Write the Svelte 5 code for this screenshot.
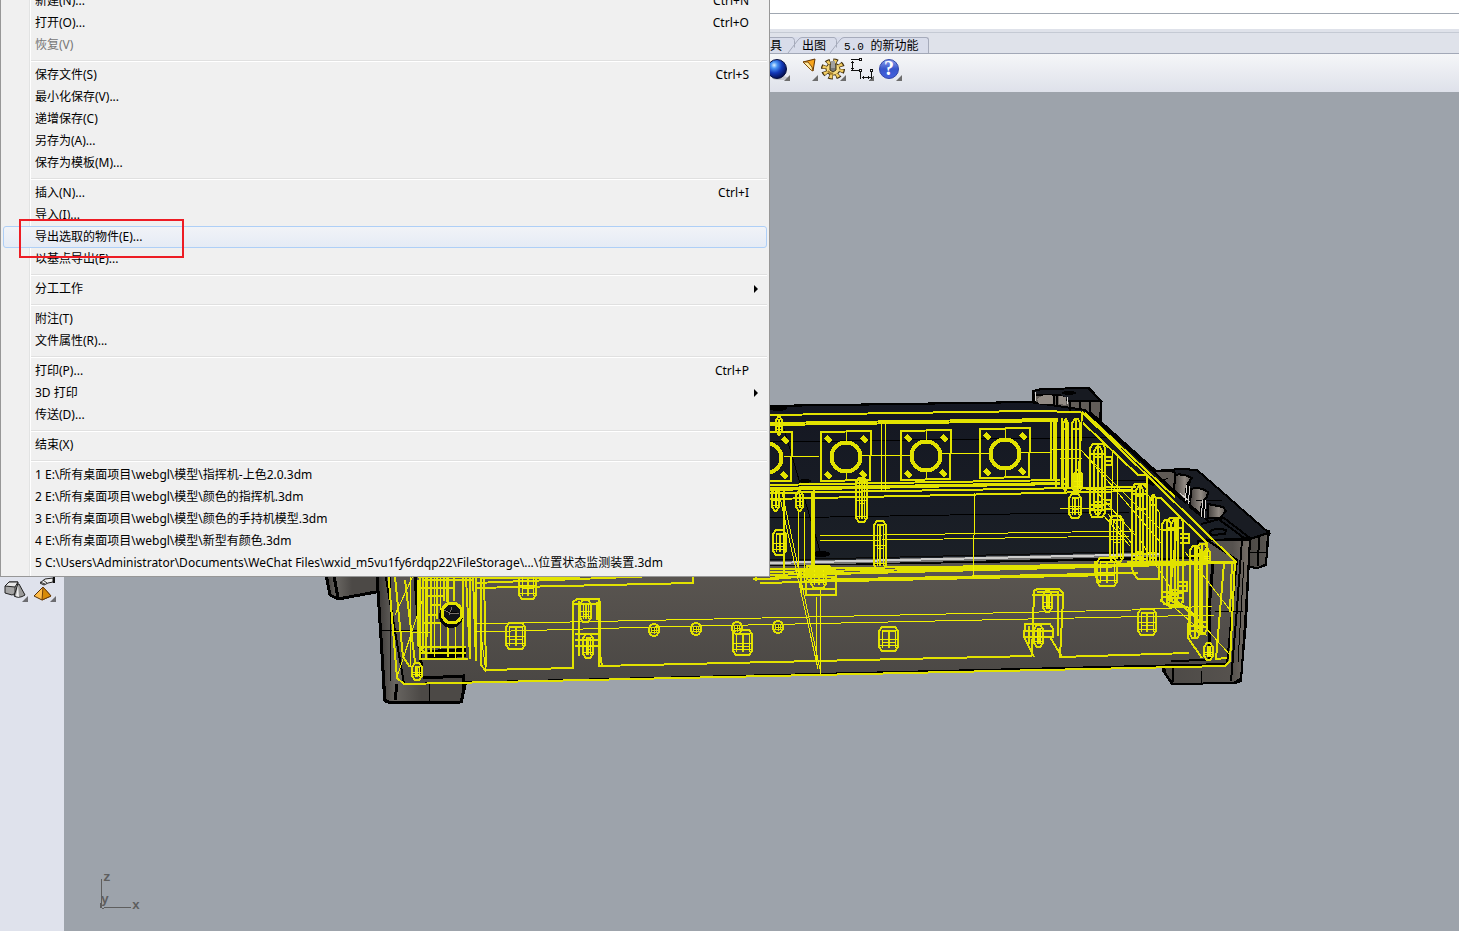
<script>
  const groups = [
    [
      { label: '新建(N)...', key: 'Ctrl+N' },
      { label: '打开(O)...', key: 'Ctrl+O' },
      { label: '恢复(V)', disabled: true }
    ],
    [
      { label: '保存文件(S)', key: 'Ctrl+S' },
      { label: '最小化保存(V)...' },
      { label: '递增保存(C)' },
      { label: '另存为(A)...' },
      { label: '保存为模板(M)...' }
    ],
    [
      { label: '插入(N)...', key: 'Ctrl+I' },
      { label: '导入(I)...' },
      { label: '导出选取的物件(E)...', active: true },
      { label: '以基点导出(E)...' }
    ],
    [{ label: '分工工作', sub: true }],
    [{ label: '附注(T)' }, { label: '文件属性(R)...' }],
    [
      { label: '打印(P)...', key: 'Ctrl+P' },
      { label: '3D 打印', sub: true },
      { label: '传送(D)...' }
    ],
    [{ label: '结束(X)' }],
    [
      { label: '1 E:\\所有桌面项目\\webgl\\模型\\指挥机-上色2.0.3dm' },
      { label: '2 E:\\所有桌面项目\\webgl\\模型\\颜色的指挥机.3dm' },
      { label: '3 E:\\所有桌面项目\\webgl\\模型\\颜色的手持机模型.3dm' },
      { label: '4 E:\\所有桌面项目\\webgl\\模型\\新型有颜色.3dm' },
      { label: '5 C:\\Users\\Administrator\\Documents\\WeChat Files\\wxid_m5vu1fy6rdqp22\\FileStorage\\...\\位置状态监测装置.3dm' }
    ]
  ];

  // Connector flanges on the rear wall: centre of each bore.
  const flanges = [[767, 458], [846, 457], [926, 456], [1005, 454]];
  // Threaded bosses: x, y, width, height.
  const bosses = [
    [506, 623, 19, 26], [519, 570, 17, 29], [733, 630, 19, 25], [879, 627, 19, 24],
    [1138, 609, 18, 26], [412, 663, 10, 17], [580, 600, 11, 22], [583, 634, 10, 24],
    [1043, 591, 9, 21], [1034, 625, 9, 22], [1204, 643, 9, 17], [773, 530, 13, 25],
    [856, 478, 11, 44], [874, 521, 12, 48], [796, 491, 7, 20], [1069, 494, 12, 24],
    [772, 488, 7, 23], [776, 416, 6, 19], [811, 566, 15, 22], [1097, 558, 20, 28],
    [1110, 516, 13, 46], [1204, 548, 6, 16], [1074, 470, 8, 22]
  ];
  const holes = [[654, 630], [696, 629], [737, 628], [778, 627]];
  // Tall ribs along the right wall: x, top, width, height.
  const ribs = [
    [1063, 419, 5, 72], [1072, 419, 8, 72], [1090, 444, 15, 73], [1094, 447, 8, 67],
    [1132, 484, 15, 82], [1136, 486, 7, 78], [1150, 495, 6, 70], [1162, 520, 9, 84],
    [1167, 518, 16, 87], [1171, 520, 7, 82], [1190, 546, 10, 92], [1197, 544, 10, 90]
  ];
</script>

<div class="app">
  <header>
    <div class="command"></div>
    <div class="prompt"></div>
    <div class="tabs">
      <button class="tab">工具</button>
      <svg class="slant" viewBox="0 0 16 16"><path d="M0 .5h6q2 0 2.500 3v7M2 16 12 3Q14 .5 16 .5" /></svg>
      <button class="tab">出图</button>
      <svg class="slant" viewBox="0 0 16 16"><path d="M0 .5h6q2 0 2.500 3v7M2 16 12 3Q14 .5 16 .5" /></svg>
      <button class="tab last"><span class="mono">5.0&nbsp;</span>的新功能</button>
    </div>
    <div class="toolbar">
      <button class="tool" aria-label="Render">
        <svg viewBox="0 0 28 28">
          <defs><radialGradient id="ball" cx=".35" cy=".3" r=".75"><stop offset="0" stop-color="#d9efff" /><stop offset=".22" stop-color="#4b96f5" /><stop offset=".55" stop-color="#1238b8" /><stop offset="1" stop-color="#020a48" /></radialGradient></defs>
          <ellipse cx="18" cy="24" rx="8" ry="2" fill="#c3c5cd" /><circle cx="15" cy="15" r="9.500" fill="url(#ball)" stroke="#061040" />
          <path d="M22 27h6v-6z" fill="#6d6d6d" />
        </svg>
      </button>
      <button class="tool" aria-label="Spotlight">
        <svg viewBox="0 0 28 28"><path d="m13 8 12-3-2 12z" fill="#f8a51c" stroke="#613300" /><path d="m13 8 8 8 2 1-1-4-4-5z" fill="#ffeaa3" stroke="#804c0a" /><path d="M22 27h6v-6z" fill="#6d6d6d" /></svg>
      </button>
      <button class="tool" aria-label="Options">
        <svg viewBox="0 0 28 28">
          <g transform="translate(15 15) scale(1 .88)">
            <circle r="9" stroke="#3c2a0a" stroke-width="6" stroke-dasharray="4.100 2.970" /><circle r="7.500" fill="#3c2a0a" />
            <circle r="8.500" stroke="#f2cd62" stroke-width="4.500" stroke-dasharray="2.700 3.975" stroke-dashoffset="-.5" /><circle r="6.500" fill="#f6da80" />
          </g>
          <path d="m10 17 2 2 3 1" stroke="#a8802c" stroke-width="2" /><path d="M12 10h6v6l-3 2-3-2z" fill="#777" stroke="#443715" /><path d="M13 7h4v7h-4z" fill="#a0a0a0" /><path d="M22 27h6v-6z" fill="#6d6d6d" />
        </svg>
      </button>
      <button class="tool" aria-label="Dimensions">
        <svg viewBox="0 0 28 28" shape-rendering="crispEdges"><path d="M22 27h6v-6z" fill="#6d6d6d" /><path d="M5 5.500h8M6.500 7v9M5 16.500h8M5 8.500h3M5 14.500h3M14.500 17v8M25.500 17v8M16 23.500h9M17.500 22v3M22.500 22v3" stroke="#111" fill="none" /><path d="M13.500 4.500h2v2h-2zM13.500 15.500h2v2h-2zM24.500 15.500h2v2h-2z" fill="#fff" stroke="#111" /></svg>
      </button>
      <button class="tool" aria-label="Help">
        <svg viewBox="0 0 28 28">
          <defs><linearGradient id="help" x2="0" y2="1"><stop stop-color="#8ca2ee" /><stop offset=".5" stop-color="#3755cb" /><stop offset="1" stop-color="#4662df" /></linearGradient></defs>
          <circle cx="15" cy="15" r="9.500" fill="url(#help)" stroke="#3346a8" /><text x="15" y="21" text-anchor="middle" class="question">?</text><path d="M22 27h6v-6z" fill="#6d6d6d" />
        </svg>
      </button>
    </div>
  </header>

  <main>
    <aside>
      <button class="tool" aria-label="Solids">
        <svg viewBox="0 0 28 28"><path d="m5 12 4-4h9l-2 11-4 2-7-2z" fill="#a4a4a4" stroke="#222" /><path d="m5 12 4-4h9l-3 5z" fill="#e6e6e6" stroke="#222" /><path d="M15 13v7" stroke="#333" /><path d="m18 10-4 12q5 3 11-1L19 10z" fill="#999" stroke="#222" /><path d="m18 11-2 11 3 1z" fill="#eee" /><path d="M22 28h6v-6z" fill="#6c6c70" /></svg>
      </button>
      <button class="tool" aria-label="Edit solids">
        <svg viewBox="0 0 28 28"><path d="m12 9 5-4 8-1v4l-5 1-4 2z" fill="#eee" stroke="#222" /><path d="M25 3h2v6h-2z" fill="#111" /><path d="m12 8 5 2m-2-4 4 3" stroke="#333" /><path d="m6 22 9-9 8 9-9 4z" fill="#ffbd4b" stroke="#553008" /><path d="m15 13-1 13 9-4z" fill="#d88b08" stroke="#70400c" /><path d="M22 28h6v-6z" fill="#6c6c70" /></svg>
      </button>
    </aside>

    <section class="viewport" aria-label="Perspective">
      <svg class="scene" viewBox="64 92 1395 839" preserveAspectRatio="xMinYMin slice">
        <defs>
          <linearGradient id="front" x2="0" y2="1"><stop stop-color="#5e5954" /><stop offset="1" stop-color="#4a4744" /></linearGradient>
          <linearGradient id="leg"><stop stop-color="#393634" /><stop offset=".2" stop-color="#686561" /><stop offset=".5" stop-color="#4c4946" /></linearGradient>
          <linearGradient id="legright"><stop stop-color="#4c4946" /><stop offset=".8" stop-color="#56524e" /><stop offset="1" stop-color="#777069" /></linearGradient>
          <linearGradient id="bore"><stop stop-color="#45413e" /><stop offset=".6" stop-color="#918a83" /><stop offset="1" stop-color="#575350" /></linearGradient>
          <linearGradient id="deck" x2="0" y2="1"><stop stop-color="#141722" /><stop offset="1" stop-color="#1c2127" /></linearGradient>
        </defs>

        <g class="solid">
          <path d="M326 570l4 25 8 4 40-7v-22z" fill="url(#leg)" />
          <path d="M377 570l7 128 6 5 72-1 4-25-60-5V570z" fill="url(#leg)" />
          <path d="M1250 534l19-3-3 33-8 4-9-1z" fill="url(#legright)" />
          <path d="M1033 402v-11l55-2 13 13-1 20-17-12z" fill="#625d58" />
          <path d="M1033 391l9-2 46-1 13 13-33 0-8-6-27 0z" fill="#171a21" />
          <path d="M1155 471l26-2 16 1 72 63-19 6-60-2z" fill="#191c23" />
          <path d="M760 406l270-4 55 8 65 58 98 73-16 25-474 12z" fill="url(#deck)" />
          <path d="M1198 541l52-3-4 85-5 55-7 5-62 1-9-13 0-7 35-18z" fill="url(#legright)" />
          <path d="M385 572l820-14 2-18 30 20-10 104-823 20z" fill="url(#front)" stroke="none" />
          <path d="M1153 471l19 0 3 2-1 20z" fill="#5f5a55" />
          <path d="M1175 475q8-2 17 3-6 6-6 14l-1 10-11-9z" fill="url(#bore)" />
          <path d="M1191 489q8-3 17 3l-1 5q-5 4-6 12v7l-11-9z" fill="url(#bore)" />
          <path d="M1208 504l15 3 3 4-6 7-12 0z" fill="url(#bore)" />
        </g>

        <g class="black">
          <path d="M770 406l265-4M1035 402l-2-11 8-2 48-1 12 13v20M1060 395l8 6 31 0M1070 402v10M1090 402v14M1080 402v8" />
          <path d="M1085 410L1209 522M1090 412l66 59 26-2 15 1 72 63M1186 500l4-20M1203 516l2-18M1201 524l23-6 26 20M1210 532q4-5 16-2l-1 4-14 1zM1242 540l-5 68-6 73M1250 539l-4 69-5 73-6 2-62 1-8-11-1-8M1171 661l37-1M1173 664v18M1250 539l18-6-2 32-8 3M1259 535l-1 31M1210 540h40" />
          <path d="M326 575l4 20 8 4 38-7M377 575l8 126 7 2 69-1 5-21M338 598l-4-22M423 678l40-2v15M397 684l-2 16M415 576l7 100M1213 562l-4 48 1 50" stroke-width="3" />
          <path d="M429 684v19M379 630h38M1215 612l28-1M1201 684v-13M770 442l350-5M770 518l360-6M784 429l36 122M1110 480h45M1196 500h26M1250 552h16" stroke-width="1" />
          <path d="M390 570v111M1244 562l-6 100" stroke-width="1" />
        </g>
        <path d="M1187 485l-2 16M1190 486l-2 18M1203 500l-2 17M1206 500l-2 18M1035 392v9M1067 397v7M1180 493l10 9" stroke="#d9d6d1" stroke-width="1" fill="none" />
        <path d="M1037 399q8-7 16-3v8l-14 0zM1059 396l7 1v8l-7-1z" fill="#918a83" /><path d="M1054 396v9M1057 396v9" stroke="#000" stroke-width="2" />
        <g fill="#000"><ellipse cx="778" cy="408" rx="9" ry="3" /><ellipse cx="821" cy="554" rx="9" ry="3" /><ellipse cx="805" cy="481" rx="6" ry="2" /><path d="M428 650l38-2v9l-38 2zM1144 482l25-4-16 8z" /><ellipse cx="1069" cy="393" rx="7" ry="2" /></g>
        <path d="M770 564l390-9" stroke="#777" stroke-width="5" /><path d="M770 563l390-9" stroke="#ccc" stroke-width="2" /><path d="M770 566l390-9M770 560l390-9" stroke="#090909" stroke-width="1" />

        <g class="wire bold">
          <path d="M770 415l262-4 48 1 5 3M1082 412l153 149-5 100-5 5L404 684l-7-6-9-108" />
          <path d="M770 423l288-4M770 425l288-4M770 485l290-5M770 488l290-5M770 493l366-6M770 499l366-8M770 490l290-6M1051 419v62M1054 419v62" />
          <path d="M770 575l434-12M480 578h100M753 579h20l60-5 372-10M770 569l464-6M770 572l350-7M808 580l330-7M760 583l350-8M475 588l218-5v-7M475 583l180-7M756 581v-4" />
          <path d="M481 577v88l4 5 88-2V602l4-3h22v67l433-10M484 577l2 90M573 604h26M597 602v18M600 601v53l2 12M575 634h26M575 640h26M575 646h24M579 601v55" />
          <path d="M1032 656l2-65 3-2h22l4 4v6l-3 58 129-4M1037 592h21v44M1032 595h30M1025 624h25l3 5v8h-29zM1024 637l10 20M1050 637l12 20M1029 626v18M1025 631h28" />
          <path d="M476 577v84M470 577v82M463 577v82h-43V575M426 577v82h42M395 577l8 80 7 10M405 580l10 82M448 577v80M420 647h46M420 653h46M466 577l4 80M473 577l3 84" />
          <path d="M1083 423l55 52h9M1085 413l90 84M1161 498l46 45-2 22M1137 484h6l4 4v-13M1155 498h7M1062 418v70h20M1056 418v70M1082 412l-4 78M784 491v84l-14 4M814 490v86M812 492v84M770 578l23-1M1224 563l-8 96 11-1M1232 562l-2 50M1178 519l-9 81 20 8-1 30 14 20" />
        </g>
        <g class="wire">
          <path d="M475 624l287-6 370-8 80-4M475 632l180-5 560-12M820 536l315-5M820 541l310-5M881 424v67M885 424v67M975 493l-2 85M798 512v65M804 512v70M779 493l39 176M782 492l39 182M816 597v64M820 590v84M395 615l23-50M397 677l26-79M410 577v90M434 577v80M440 577v72M455 625v35M392 631l40 2M480 627l6 45" />
          <path d="M784 457l36-1M861 456l50-1M941 454l50-1M1020 453l32-1M1052 449h28l81 81M1083 452l78 91M1113 452l-3 110M1117 457v80M1095 490l40 45M1060 458h22M1145 490l14 22v50M1185 552l45 58M1188 608l42 47M1175 608l32 28M1086 489h46M1060 508h34M1183 543v60M1140 540l35 55M1104 516l26 30M1108 514l24 30" />
        </g>

        {#each ribs as [x, y, w, h]}
          <g class="wire bold">
            <path d="M{x} {y + 4}l3-4h{w - 5}l2 4v{h - 8}l-3 4h{5 - w}l-2-4zM{x + Math.round(w / 2)} {y}v{h}M{x - 1} {y + 10}h{w + 2}M{x - 1} {y + h - 12}h{w + 2}M{x} {y + h - 7}h{w}" />
          </g>
        {/each}

        {#each bosses as [x, y, w, h]}
          <g class="wire">
            <path class="edge" d="M{x} {y + 4}l3-4h{w - 6}l3 4v{h - 8}l-3 4h{6 - w}l-3-4z" />
            <path class="edge" d="M{x + Math.round(w / 2)} {y + 3}v{h - 6}M{x + 3} {y + 4}h{w - 6}" />
            <path d="M{x + 3} {y + 3}v{h - 6}M{x + w - 3} {y + 3}v{h - 6}M{x} {y + h - 6}h{w}M{x} {y + Math.round(h / 2)}h{w}M{x + 3} {y + Math.round(h / 2) + 3}h{w - 6}" />
          </g>
        {/each}

        {#each flanges as [x, y]}
          <g class="wire bold">
            <path d="M{x - 25} {y - 25}l50-1-1 49-49 1z" />
            <circle cx={x} cy={y} r="15" stroke-width="3" /><circle cx={x} cy={y} r="13" stroke-width="1" />
            <path d="M{x} {y - 26}v10M{x} {y + 16}v8" stroke-width="1" />
            <path d="M{x - 20} {y - 20}l5 5M{x + 16} {y - 20}l5 5M{x - 20} {y + 16}l5 5M{x + 15} {y + 15}l5 5" stroke-width="5" />
          </g>
        {/each}

        {#each holes as [x, y]}
          <g class="wire bold"><ellipse cx={x} cy={y} rx="5" ry="6" /><ellipse cx={x} cy={y} rx="3" ry="3" fill="#282828" stroke-width="1" /><path d="M{x - 3} {y}h7M{x} {y - 3}v7" stroke-width="1" /></g>
        {/each}

        <circle cx="451" cy="616" r="12" fill="#050607" /><circle cx="452" cy="613" r="10" fill="#101317" />
        <path d="M444 610l8 4 7-1M452 607l-3 8" stroke="#77716b" />
        <g class="wire bold"><circle cx="452" cy="613" r="10" stroke-width="3" /><path d="M447 578v24M424 580h50M421 588h34M425 596h18M430 605h10M428 615h10M424 623h16M418 580v65l7 8M423 577v72M427 577v60M431 577v75M437 577v42M444 577v24M454 577v24M418 577h62M807 566h22l7 5v24h-30zM801 577h34M803 589h33M801 569v24M770 569h64M803 573h30" /></g>
        <g class="wire bold"><path d="M1104 457h8v8h-8M1104 461h7M1104 500h7v9h-7M1104 504h6M1137 509h9M1180 534h9v9h-9M1180 538h8M1178 582h9v9h-9M1178 586h8M1131 562h28v17h-21l-5-6zM1095 561v14l5 8M1127 562h110M1160 600l10 7h15M1176 600l24 22" /></g>

        <g class="axis"><path d="M101.500 879v29M106 907.500h25M100 903v3q2 4 6 1" /><text x="103" y="881">z</text><text x="132" y="909">x</text><text x="101" y="903">y</text></g>
      </svg>
    </section>
  </main>

  <nav class="menu" aria-label="File">
    {#each groups as group}
      <div class="group">
        {#each group as item}
          <button class="item" class:active={item.active} disabled={item.disabled}>
            <span>{item.label}</span>
            {#if item.key}<kbd>{item.key}</kbd>{/if}
            {#if item.sub}<svg class="arrow" viewBox="0 0 4 8"><path d="M0 0v8l4-4z" /></svg>{/if}
            {#if item.active}<i class="mark"></i>{/if}
          </button>
        {/each}
      </div>
    {/each}
  </nav>
</div>

<style>
  :global(body) { margin: 0; overflow: hidden; }
  .app { position: relative; min-height: 100vh; display: flex; flex-direction: column; overflow: hidden; background: #dfe2eb; font: 12px/22px "Noto Sans", "Noto Sans CJK SC", sans-serif; color: #000; }
  button { border: 0; padding: 0; margin: 0; background: none; font: inherit; color: inherit; }
  .command { height: 13px; background: #fff; border-bottom: 1px solid #a0a7b1; }
  .prompt { height: 15px; background: #fff; }
  .tabs { display: flex; align-items: flex-end; height: 24px; padding-left: 758px; border-bottom: 1px solid #a2a8b7; background: linear-gradient(#dfe2ea 3px, #c5cad4 3px, #c5cad4 4px, #dfe2ea 4px); }
  .tab { height: 16px; width: 28px; flex: none; text-align: left; white-space: nowrap; font: 12px/13px "Noto Sans CJK SC", sans-serif; background: #d8dcea; border-top: 1px solid #a6abbb; padding-bottom: 2px; }
  .tab + .slant + .tab { width: 26px; }
  .tabs .tab.last { width: auto; padding-right: 10px; border-right: 1px solid #a6abbb; border-radius: 0 3px 0 0; }
  .mono { font-family: "Liberation Mono", monospace; font-size: 11px; white-space: pre; }
  .slant { width: 16px; height: 16px; flex: none; background: #d8dcea; }
  .slant path { fill: none; stroke: #a6abbb; }
  .toolbar { display: flex; height: 38px; padding-left: 762px; background: linear-gradient(#f5f6f8, #dee1ea); }
  .tool { width: 28px; height: 28px; flex: none; }
  .tool svg { display: block; width: 28px; height: 28px; fill: none; }
  .question { font: bold 20px "Liberation Serif", serif; fill: #fff; }
  main { flex: 1; display: flex; }
  aside { display: flex; align-items: flex-start; width: 64px; box-sizing: border-box; padding-top: 482px; flex: none; background: #dfe2ec; }
  .viewport { position: relative; flex: 1; background: #9da3ab; }
  .scene { position: absolute; inset: 0; width: 100%; height: 100%; shape-rendering: crispEdges; }
  .solid path { stroke: #000; stroke-width: 2; }
  .black { fill: none; stroke: #000; stroke-width: 2; }
  .wire { fill: none; stroke: #f0f000; stroke-width: 1; }
  .bold { stroke: #e2e200; stroke-width: 2; }
  .edge { stroke: #e2e200; stroke-width: 2; }
  .axis { fill: none; stroke: #5e5e5e; stroke-width: 1; }
  .axis text { font: bold 13px "Liberation Mono", monospace; fill: #5e5e5e; stroke: none; }
  .menu { position: absolute; left: 0; top: -13px; min-width: 770px; box-sizing: border-box; padding: 2px; border: 1px solid #979797; background: linear-gradient(90deg, transparent 28px, #e2e3e3 28px, #e2e3e3 29px, #fff 29px, #fff 30px, transparent 30px) #f0f0f0; }
  .group + .group { margin-top: 4px; padding-top: 4px; background: linear-gradient(#e0e0e0 1px, #fff 1px, #fff 2px, transparent 2px) 28px 0 no-repeat; }
  .item { position: relative; display: flex; align-items: center; width: 100%; height: 22px; box-sizing: border-box; padding: 0 17px 0 31px; border: 1px solid transparent; border-radius: 3px; line-height: 20px; text-align: left; white-space: nowrap; }
  .item:disabled { color: #777; }
  .active { border-color: #aecff7; background: linear-gradient(#f1f3f7, #e5ebf5); }
  kbd { margin-left: auto; font: inherit; }
  .arrow { width: 4px; height: 8px; margin-left: auto; margin-right: -9px; }
  .mark { position: absolute; z-index: 1; left: 15px; top: -8px; width: 161px; height: 35px; border: 2px solid #ed1c24; }
</style>
